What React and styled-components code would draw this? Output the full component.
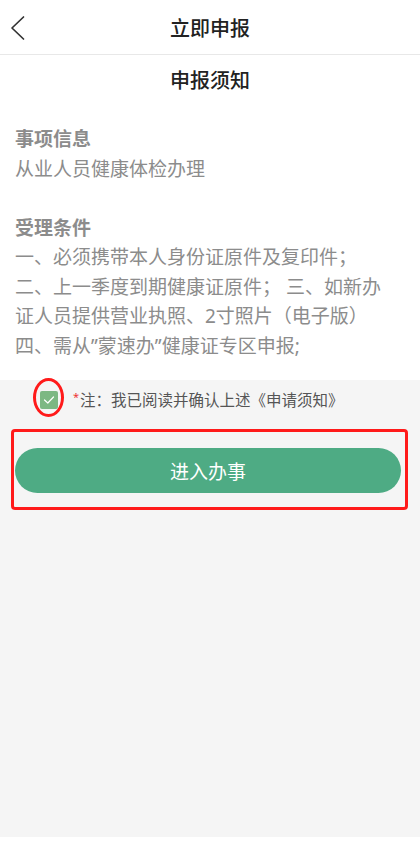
import React from "react";
import styled, { createGlobalStyle } from "styled-components";

const Global = createGlobalStyle`
  html, body { margin: 0; padding: 0; background: #fff; }
  body { font-family: "Noto Sans", "Noto Sans CJK SC", sans-serif; }
  * { box-sizing: border-box; }
`;

const Page = styled.div`
  width: 420px;
  display: flex;
  flex-direction: column;
`;

const Header = styled.header`
  height: 55px;
  border-bottom: 1px solid #e8e8e8;
  display: flex;
  align-items: center;
  justify-content: center;
  position: relative;
`;

const Back = styled.button`
  position: absolute;
  left: 6px;
  top: 12px;
  width: 24px;
  height: 32px;
  border: 0;
  background: none;
  padding: 0;
  display: flex;
  align-items: center;
  justify-content: center;
`;

const Title = styled.h1`
  margin: 0;
  font-size: 20px;
  font-weight: 500;
  color: #222;
  line-height: 28px;
  margin-top: 4px;
`;

const Notice = styled.section`
  background: #fff;
  padding: 11px 15px 19px;
`;

const SubTitle = styled.h2`
  margin: 0 0 29px;
  text-align: center;
  font-size: 20px;
  font-weight: 500;
  color: #222;
  line-height: 30px;
`;

const Block = styled.div`
  margin-bottom: ${(p) => (p.$gap ? "29.5px" : "0")};
`;

const Heading = styled.div`
  font-size: 19px;
  line-height: 29.5px;
  font-weight: 700;
  color: #8c8c8c;
`;

const Line = styled.div`
  font-size: 19px;
  line-height: 29.5px;
  color: #8c8c8c;
  white-space: pre;
`;

const Footer = styled.section`
  background: #f5f5f5;
  height: 457px;
  display: flex;
  flex-direction: column;
`;

const AgreeRow = styled.label`
  height: 40px;
  display: flex;
  align-items: center;
  padding-left: 40px;
`;

const CheckWrap = styled.span`
  position: relative;
  width: 18px;
  height: 18px;
  margin-right: 15px;
`;

const Check = styled.span`
  display: flex;
  width: 18px;
  height: 18px;
  border-radius: 2px;
  background: #7cb883;
  align-items: center;
  justify-content: center;
`;

const RedCircle = styled.span`
  position: absolute;
  left: -7px;
  top: -13px;
  width: 31px;
  height: 39px;
  border: 3.5px solid #ff1a1a;
  border-radius: 50%;
`;

const AgreeText = styled.span`
  font-size: 15.5px;
  color: #555;
  line-height: 20px;
  display: flex;
  align-items: flex-start;
`;

const Star = styled.span`
  color: #e33;
  font-size: 11px;
  line-height: 14px;
  margin-right: 1px;
`;

const Frame = styled.div`
  margin: 9px 0 0 11px;
  width: 397px;
  border: 3px solid #ff1a1a;
  border-radius: 4px;
  padding: 16px 4px 14px 1px;
`;

const EnterButton = styled.button`
  width: 100%;
  height: 45px;
  border: 0;
  border-radius: 23px;
  background: #4eab84;
  color: #fff;
  font-family: "Noto Sans", "Noto Sans CJK SC", sans-serif;
  font-size: 19px;
`;

export default function App() {
  return (
    <Page>
      <Global />
      <Header>
        <Back aria-label="back">
          <svg width="16" height="26" viewBox="0 0 16 26">
            <polyline points="13.5,2 2,13 13.5,24" fill="none" stroke="#333" strokeWidth="1.7" strokeLinecap="round" strokeLinejoin="round" />
          </svg>
        </Back>
        <Title>立即申报</Title>
      </Header>
      <Notice>
        <SubTitle>申报须知</SubTitle>
        <Block $gap>
          <Heading>事项信息</Heading>
          <Line>从业人员健康体检办理</Line>
        </Block>
        <Block>
          <Heading>受理条件</Heading>
          <Line>一、必须携带本人身份证原件及复印件；</Line>
          <Line>二、上一季度到期健康证原件； 三、如新办</Line>
          <Line>证人员提供营业执照、2寸照片（电子版）</Line>
          <Line>四、需从”蒙速办”健康证专区申报;</Line>
        </Block>
      </Notice>
      <Footer>
        <AgreeRow>
          <CheckWrap>
            <Check>
              <svg width="12" height="10" viewBox="0 0 12 10">
                <polyline points="1.5,5 4.8,8 10.5,2" fill="none" stroke="#fff" strokeWidth="1.2" strokeLinecap="round" strokeLinejoin="round" />
              </svg>
            </Check>
            <RedCircle />
          </CheckWrap>
          <AgreeText>
            <Star>*</Star>注：我已阅读并确认上述《申请须知》
          </AgreeText>
        </AgreeRow>
        <Frame>
          <EnterButton>进入办事</EnterButton>
        </Frame>
      </Footer>
    </Page>
  );
}
